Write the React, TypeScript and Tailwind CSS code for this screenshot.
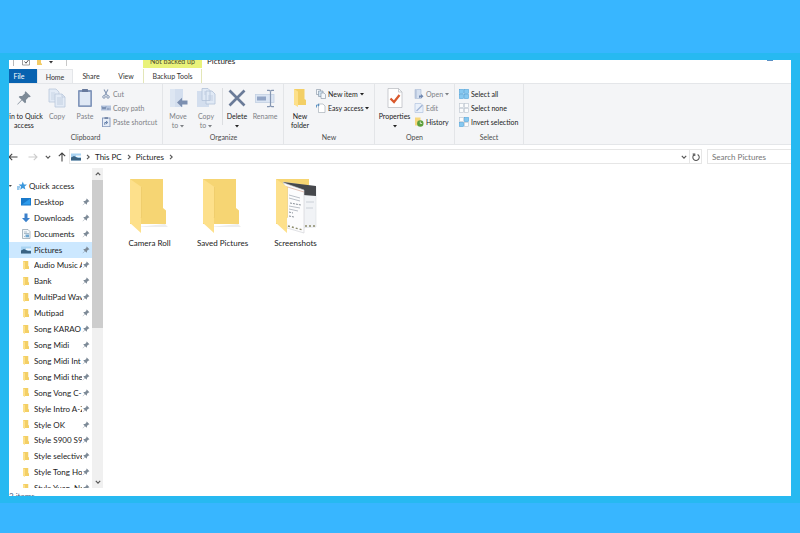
import type { ReactNode } from 'react';
import { clsx } from 'clsx';

/* ---------- icons ---------- */

function PinIcon({ className }: { className: string }) {
  return (
    <svg viewBox="0 0 16 16" className={className} fill="#7d8a97">
      <path d="M9.6 1.2 14.8 6.4 13.6 7.3 12.8 7 9.9 9.9 10.1 12.3 9 13.2 6 10.3 1.8 14.4 1.2 14.6 1.5 13.9 5.5 9.8 2.7 7 3.7 6 6.1 6.1 9 3.2 8.7 2.2Z" />
    </svg>
  );
}

function CopyIcon() {
  return (
    <svg viewBox="0 0 20 20" className="size-5" fill="#e3ebf6" stroke="#bac8dc" strokeWidth="0.8">
      <path d="M2 1h7l3 3v10H2z" />
      <path d="M4 5h4M4 7h4M4 9h4M4 11h4" stroke="#c2cfe2" />
      <path d="M8 6h7l3 3v10H8z" />
      <path d="M15 6v3h3M10 10h6M10 12h6M10 14h6M10 16h6" fill="none" />
    </svg>
  );
}

function PasteIcon() {
  return (
    <svg viewBox="0 0 20 20" className="size-5">
      <rect x="3" y="2" width="14" height="17" rx="1" fill="#8397bb" />
      <rect x="4.7" y="4" width="10.6" height="13.3" fill="#dfe8f5" />
      <rect x="7" y="1" width="6" height="3" rx="0.5" fill="#66799c" />
    </svg>
  );
}

function MoveIcon() {
  return (
    <svg viewBox="0 0 20 20" className="size-5">
      <path d="M2 1h13v18H2z" fill="#d3deee" />
      <path d="M2 1h5v18H2z" fill="#dde6f2" />
      <path d="M9 14.500 14 9.700v2.800h5.500v4H14v2.800z" fill="#7c8fb0" />
    </svg>
  );
}

function CopyToIcon() {
  return (
    <svg viewBox="0 0 20 20" className="size-5">
      <path d="M1 3h12v16H1z" fill="#d3deee" />
      <path d="M6 0.500h6l2 2v10H6zM10 3h6l3 3v10h-9z" fill="#e0e9f5" stroke="#b2c1d8" strokeWidth="0.8" />
      <path d="M12 8h5M12 10h5M12 12h5M8 4h2M8 6h2" stroke="#b8c6dc" strokeWidth="0.7" />
    </svg>
  );
}

function DeleteIcon() {
  return (
    <svg viewBox="0 0 20 20" className="size-5" stroke="#6a7b98" strokeWidth="2.7" fill="none">
      <path d="M2.500 2.500 17.500 17.500M17.500 2.500 2.500 17.500" />
    </svg>
  );
}

function RenameIcon() {
  return (
    <svg viewBox="0 0 20 20" className="size-5" fill="none">
      <rect x="0.5" y="6.500" width="18.500" height="8" fill="#dbe5f3" stroke="#c3d0e3" strokeWidth="0.8" />
      <rect x="2" y="8.500" width="9" height="4" fill="#92a5c6" />
      <path d="M12 2.300h2.200l1.300 1 1.300-1H19M15.500 3.300v14.400M12 18.700h2.200l1.300-1 1.300 1H19" stroke="#8596b2" strokeWidth="1.2" />
    </svg>
  );
}

function FolderIcon({ className }: { className: string }) {
  return (
    <svg viewBox="0 0 12 18" className={className} preserveAspectRatio="none">
      <path d="M0 0h10.500v10l1.500 1v5H0z" fill="#f3cf65" />
      <path d="M0 0 4 2.500v15.500L0 15.500z" fill="#fde08a" />
    </svg>
  );
}

function PropertiesIcon() {
  return (
    <svg viewBox="0 0 20 20" className="size-5">
      <path d="M3 0.500h10.500L17 4v15.500H3z" fill="#fff" stroke="#b4b8bd" strokeWidth="0.7" />
      <path d="M13.500 0.500V4H17" fill="none" stroke="#b4b8bd" strokeWidth="0.7" />
      <path d="M5.500 10.500 9 14l5.500-7" fill="none" stroke="#d9592d" strokeWidth="2.2" />
    </svg>
  );
}

function CutIcon() {
  return (
    <svg viewBox="0 0 10 10" className="size-2.5" fill="none" stroke="#8496b3">
      <path d="M3 0.500 6.300 6.500M7 0.500 3.700 6.500" strokeWidth="1.100" />
      <circle cx="3" cy="7.900" r="1.300" />
      <circle cx="7" cy="7.900" r="1.300" />
    </svg>
  );
}

function CopyPathIcon() {
  return (
    <svg viewBox="0 0 10 10" className="size-2.5">
      <rect y="2.500" width="10" height="5" fill="#b3c4de" />
      <path d="M1 3.500 2 6.200 3 4 4 6.200 5 3.500" fill="none" stroke="#5b7197" strokeWidth="0.7" />
      <path d="M6 6h.7M7.300 6H8M8.600 6h.7" stroke="#5b7197" />
    </svg>
  );
}

function PasteShortcutIcon() {
  return (
    <svg viewBox="0 0 10 10" className="size-2.5">
      <rect x="1.500" y="1" width="7.500" height="8.700" fill="#e6edf7" stroke="#8397bb" strokeWidth="0.9" />
      <rect x="3.500" y="0.300" width="3.500" height="1.500" fill="#66799c" />
      <path d="M3.800 7.800V5.500h2M5 4l1.800 1.500L5 7" fill="none" stroke="#54719f" strokeWidth="0.9" />
    </svg>
  );
}

function NewItemIcon() {
  return (
    <svg viewBox="0 0 10 10" className="size-2.5" fill="#f4f8fc" stroke="#7f8f9f" strokeWidth="0.6">
      <path d="M0.500 0.500h4v5h-4z" />
      <path d="M2.500 2h4.500v5.500H2.500z" fill="#cfe2f1" />
      <path d="M5 4h3l1.500 1.500v4H5z" />
    </svg>
  );
}

function EasyAccessIcon() {
  return (
    <svg viewBox="0 0 10 10" className="size-2.5">
      <path d="M2.500 1H7l2 2v6.500H2.500z" fill="#fff" stroke="#9aa4ae" strokeWidth="0.6" />
      <path d="M0.500 4.500V2h2.500M2 0.800 3.300 2 2 3.200" fill="none" stroke="#3e7fb9" strokeWidth="0.8" />
    </svg>
  );
}

function OpenIcon() {
  return (
    <svg viewBox="0 0 10 10" className="size-2.5">
      <path d="M1 0.500h6v9H1z" fill="#d5e0f0" stroke="#a8b9d4" strokeWidth="0.6" />
      <path d="M2 1.500v7" stroke="#7f93b6" strokeDasharray="1 1" />
      <path d="M5 9V6.500h2V5l2.500 2.300L7 9.500V8" fill="#7188b0" />
    </svg>
  );
}

function EditIcon() {
  return (
    <svg viewBox="0 0 10 10" className="size-2.5">
      <path d="M1 0.500h6l2 2v7H1z" fill="#e9f0fa" stroke="#b2c4df" strokeWidth="0.7" />
      <path d="M2.500 8 8.500 2" stroke="#a1b5d4" strokeWidth="1.300" />
    </svg>
  );
}

function HistoryIcon() {
  return (
    <svg viewBox="0 0 10 10" className="size-2.5">
      <path d="M1 0.500h5.500v8H1z" fill="#f6d77b" />
      <circle cx="6.300" cy="6.500" r="3.200" fill="#5d9f3c" />
      <path d="M6.300 4.500v2h1.800" stroke="#e8f3e2" strokeWidth="0.800" fill="none" />
    </svg>
  );
}

function SelectIcon({ kind }: { kind: 'all' | 'none' | 'invert' }) {
  const filled = { all: [1, 1, 1, 1], none: [0, 0, 0, 0], invert: [0, 1, 1, 0] }[kind];
  return (
    <svg viewBox="0 0 10 10" className="size-2.5" strokeWidth="0.6">
      {filled.map((on, i) => (
        <rect
          key={i}
          x={(i % 2) * 5 + 0.5}
          y={Math.floor(i / 2) * 5 + 0.5}
          width="4"
          height="4"
          fill={on ? '#86c8f0' : '#fbfcfd'}
          stroke={on ? '#4fa3da' : '#bac4cd'}
        />
      ))}
    </svg>
  );
}

function PictureIcon() {
  return (
    <svg viewBox="0 0 10 10" className="size-2.5 shrink-0">
      <rect y="1.500" width="10" height="7" fill="#a9d3f2" />
      <path d="M0 5.500 3 4l4 2h3v2.500H0z" fill="#3b6484" />
      <path d="M5 3.500h5v1.500H5z" fill="#f2f8fd" />
    </svg>
  );
}

function StarIcon() {
  return (
    <svg viewBox="0 0 10 10" className="size-2.5 shrink-0" fill="#3b97dc">
      <path d="M5.800 0.500 6.900 3.400 10 3.600 7.600 5.600 8.400 8.600 5.800 7 3.200 8.700 4 5.600 1.600 3.600 4.700 3.400Z" />
      <path d="M0 5.500h3v1H0zM0 7.500h2.500v1H0z" />
    </svg>
  );
}

function DesktopIcon() {
  return (
    <svg viewBox="0 0 10 10" className="size-2.5 shrink-0">
      <rect y="1" width="10" height="7.500" fill="#1979ca" />
      <path d="M1 7.500 9 1.800v5.700z" fill="#2f9cec" />
    </svg>
  );
}

function DownloadIcon() {
  return (
    <svg viewBox="0 0 10 10" className="size-2.5 shrink-0">
      <path d="M3.500 0.500h3V5H9L5 9.300 1 5h2.500z" fill="#3a80cb" />
    </svg>
  );
}

function DocumentIcon() {
  return (
    <svg viewBox="0 0 10 10" className="size-2.5 shrink-0">
      <path d="M1.500 0.500H7l2 2v7H1.500z" fill="#f2f6f9" stroke="#8d9daa" strokeWidth="0.7" />
      <path d="M3 3h3M3 4.500h5M3 7.500h1" stroke="#8aa3b6" strokeWidth="0.7" />
      <rect x="4.500" y="5.500" width="3.500" height="2.800" fill="#6fa6cf" />
    </svg>
  );
}

function Chevron({ dir, className }: { dir: 'right' | 'down' | 'up'; className?: string }) {
  const paths = { right: 'M2 0.800 4.200 3 2 5.200', down: 'M0.800 1.800 3 4.200 5.200 1.800', up: 'M0.800 4.200 3 1.800 5.200 4.200' };
  return (
    <svg viewBox="0 0 6 6" className={clsx('size-1.5 shrink-0', className)} fill="none" stroke="#555" strokeWidth="1.100">
      <path d={paths[dir]} />
    </svg>
  );
}

function Caret() {
  return (
    <svg viewBox="0 0 4 4" className="size-1 shrink-0" fill="currentColor">
      <path d="M0 1h4L2 3.500z" />
    </svg>
  );
}

function ArrowIcon({ className }: { className?: string }) {
  return (
    <svg viewBox="0 0 10 10" className={clsx('size-2.5', className)} fill="none" stroke="currentColor" strokeWidth="1.100">
      <path d="M9.500 5H1M4.200 1.800 1 5l3.200 3.200" />
    </svg>
  );
}

/* ---------- ribbon ---------- */

interface BigButtonProps {
  icon: ReactNode;
  label: string;
  second?: string;
  caret?: boolean;
  disabled?: boolean;
  className?: string;
}

function BigButton({ icon, label, second, caret, disabled, className = 'w-7' }: BigButtonProps) {
  return (
    <button
      disabled={disabled}
      className={clsx(
        'flex shrink-0 flex-col items-center pt-1 whitespace-nowrap leading-[9px]',
        disabled ? 'text-[#7d8085]' : 'text-[#222]',
        className,
      )}
    >
      <span className="mb-1 flex h-5 items-center">{icon}</span>
      <span>{label}</span>
      {(second || caret) && (
        <span className="flex h-[9px] items-center gap-0.5">
          {second}
          {caret && <Caret />}
        </span>
      )}
    </button>
  );
}

function SmallButton({ icon, label, caret, disabled }: { icon: ReactNode; label: string; caret?: boolean; disabled?: boolean }) {
  return (
    <button
      disabled={disabled}
      className={clsx('flex h-3.5 items-center gap-0.5 whitespace-nowrap', disabled ? 'text-[#7d8085]' : 'text-[#222]')}
    >
      {icon}
      <span>{label}</span>
      {caret && <Caret />}
    </button>
  );
}

function RibbonGroup({ title, className, children }: { title: string; className: string; children: ReactNode }) {
  return (
    <section className={clsx('flex shrink-0 flex-col border-r border-[#e3e5e8]', className)}>
      <div className="flex flex-1">{children}</div>
      <h2 className="pb-0.5 text-center leading-[9px] text-[#4c4c4c]">{title}</h2>
    </section>
  );
}

function Ribbon() {
  return (
    <div className="flex h-[62px] overflow-hidden border-y border-[#e4e6e9] bg-[#f4f5f7]">
      <RibbonGroup title="Clipboard" className="w-[154px]">
        <BigButton icon={<PinIcon className="size-4" />} label="Pin to Quick" second="access" className="-ml-1 w-[38px]" />
        <BigButton icon={<CopyIcon />} label="Copy" disabled />
        <BigButton icon={<PasteIcon />} label="Paste" disabled />
        <div className="ml-0.5 flex flex-col pt-[3px]">
          <SmallButton icon={<CutIcon />} label="Cut" disabled />
          <SmallButton icon={<CopyPathIcon />} label="Copy path" disabled />
          <SmallButton icon={<PasteShortcutIcon />} label="Paste shortcut" disabled />
        </div>
      </RibbonGroup>
      <RibbonGroup title="Organize" className="w-[121px] pl-px">
        <BigButton icon={<MoveIcon />} label="Move" second="to" caret disabled />
        <BigButton icon={<CopyToIcon />} label="Copy" second="to" caret disabled />
        <div className="mt-1 mb-2 ml-0.5 border-l border-[#dcdee1]" />
        <BigButton icon={<DeleteIcon />} label="Delete" caret />
        <BigButton icon={<RenameIcon />} label="Rename" disabled />
      </RibbonGroup>
      <RibbonGroup title="New" className="w-[91px]">
        <BigButton icon={<FolderIcon className="h-[18px] w-3" />} label="New" second="folder" className="w-8" />
        <div className="flex flex-col pt-[3px]">
          <SmallButton icon={<NewItemIcon />} label="New item" caret />
          <SmallButton icon={<EasyAccessIcon />} label="Easy access" caret />
        </div>
      </RibbonGroup>
      <RibbonGroup title="Open" className="w-20">
        <BigButton icon={<PropertiesIcon />} label="Properties" caret className="w-[39px]" />
        <div className="flex flex-col pt-[3px]">
          <SmallButton icon={<OpenIcon />} label="Open" caret disabled />
          <SmallButton icon={<EditIcon />} label="Edit" disabled />
          <SmallButton icon={<HistoryIcon />} label="History" />
        </div>
      </RibbonGroup>
      <RibbonGroup title="Select" className="w-[69px]">
        <div className="flex flex-col pt-[3px] pl-1">
          <SmallButton icon={<SelectIcon kind="all" />} label="Select all" />
          <SmallButton icon={<SelectIcon kind="none" />} label="Select none" />
          <SmallButton icon={<SelectIcon kind="invert" />} label="Invert selection" />
        </div>
      </RibbonGroup>
    </div>
  );
}

/* ---------- title and tabs ---------- */

function TitleBar() {
  return (
    <header className="flex h-[9px] items-start overflow-hidden">
      <div className="flex w-[134px] items-start gap-1 pl-1">
        <span className="h-1.5 border-l border-[#b8b8b8]" />
        <svg viewBox="0 0 40 6" className="ml-1 h-1.5 w-10">
          <path d="M0.500 0v5h7V0" fill="#fff" stroke="#888" strokeWidth="0.800" />
          <path d="M2.500 1.500 4 3.200 6.500 0" fill="none" stroke="#555" />
          <path d="M15 0h4v3l1 1v1h-5z" fill="#f2cb65" />
          <path d="M27 1h4l-2 2.500z" fill="#333" />
        </svg>
        <span className="h-1.5 border-l border-[#c8c8c8]" />
      </div>
      <div className="flex h-2 w-[59px] items-center justify-center bg-[#e9f27a] leading-[9px] whitespace-nowrap text-[#4b4b2d]">
        <span className="-mt-1.5">Not backed up</span>
      </div>
      <h1 className="-mt-[3px] ml-[5px] text-[8px] leading-[9px] text-[#222]">Pictures</h1>
      <span className="mr-[18px] ml-auto h-px w-1.5 bg-[#5b8fc4]" />
    </header>
  );
}

function Tabs() {
  return (
    <nav className="flex h-3.5 text-[#333]">
      <button className="w-7 bg-[#0862b0] pr-2 text-white">File</button>
      <button className="-mb-px w-9 border-x border-t border-[#e4e6e9] bg-[#f4f5f7]">Home</button>
      <button className="w-9">Share</button>
      <button className="w-[34px]">View</button>
      <button className="w-[59px] border-x border-[#e3e6b8] whitespace-nowrap">Backup Tools</button>
    </nav>
  );
}

function AddressBar() {
  return (
    <div className="flex h-[19px] shrink-0 items-end text-[8px]">
      <div className="flex h-[15px] w-[60px] shrink-0 items-center text-[#444]">
        <button aria-label="Back" className="-ml-px"><ArrowIcon /></button>
        <button aria-label="Forward" className="ml-2.5 text-[#ccc]"><ArrowIcon className="rotate-180" /></button>
        <button aria-label="Recent locations" className="ml-[7px]"><Chevron dir="down" /></button>
        <button aria-label="Up" className="ml-1.5"><ArrowIcon className="rotate-90" /></button>
      </div>
      <div className="flex h-[15px] flex-1 items-center gap-1 border border-[#e6e6e6] pl-px text-[#222]">
        <PictureIcon />
        <Chevron dir="right" />
        <a href="#this-pc">This PC</a>
        <Chevron dir="right" />
        <a href="#pictures">Pictures</a>
        <Chevron dir="right" />
        <button aria-label="Previous locations" className="ml-auto"><Chevron dir="down" /></button>
        <button aria-label="Refresh" className="-ml-0.5 flex h-full w-3 items-center justify-center border-l border-[#e6e6e6]">
          <svg viewBox="0 0 10 10" className="size-2" fill="none" stroke="#555" strokeWidth="1.300">
            <path d="M7 1.800A4 4 0 1 1 2.500 2.200M0.800 1.200h2.700v2.700" />
          </svg>
        </button>
      </div>
      <input
        type="text"
        aria-label="Search Pictures"
        placeholder="Search Pictures"
        className="ml-[5px] h-[15px] w-21 shrink-0 border border-r-0 border-[#e6e6e6] pl-1 outline-none placeholder:text-[#757575]"
      />
    </div>
  );
}

/* ---------- navigation pane ---------- */

const places: { name: string; icon?: ReactNode }[] = [
  { name: 'Desktop', icon: <DesktopIcon /> },
  { name: 'Downloads', icon: <DownloadIcon /> },
  { name: 'Documents', icon: <DocumentIcon /> },
  { name: 'Pictures', icon: <PictureIcon /> },
  { name: 'Audio Music A' },
  { name: 'Bank' },
  { name: 'MultiPad Wav' },
  { name: 'Mutipad' },
  { name: 'Song KARAO' },
  { name: 'Song Midi' },
  { name: 'Song Midi Int' },
  { name: 'Song Midi the' },
  { name: 'Song Vong C-' },
  { name: 'Style Intro A-Z' },
  { name: 'Style OK' },
  { name: 'Style S900 S9' },
  { name: 'Style selective' },
  { name: 'Style Tong Ho' },
  { name: 'Style Yuan_Na' },
];

function Sidebar() {
  return (
    <aside className="flex w-[94px] shrink-0 overflow-hidden pt-1">
      <ul className="mt-2.5 -mb-2 flex min-w-0 flex-1 flex-col text-[#222]">
        <li className="flex min-h-0 flex-1 items-center">
          <svg viewBox="0 0 4 4" className="mr-1 size-1"><path d="M0 1h3L1 3z" fill="#444" /></svg>
          <StarIcon />
          <a href="#quick" className="ml-0.5">Quick access</a>
        </li>
        {places.map(({ name, icon }) => (
          <li key={name} className={clsx('flex min-h-0 flex-1 items-center pr-0.5 pl-3', name === 'Pictures' && 'bg-[#cce8ff]')}>
            {icon ?? <span className="flex w-2.5 justify-center"><FolderIcon className="h-[9px] w-1.5" /></span>}
            <a href={`#${name}`} className="ml-[3px] min-w-0 flex-1 overflow-hidden whitespace-nowrap">{name}</a>
            <PinIcon className="size-2 shrink-0" />
          </li>
        ))}
      </ul>
      <div className="flex w-[11px] shrink-0 flex-col items-center bg-[#f0f0f0]">
        <button aria-label="Scroll up" className="flex h-3 items-center"><Chevron dir="up" /></button>
        <div className="min-h-0 w-full flex-1"><div className="h-1/2 bg-[#cdcdcd]" /></div>
        <button aria-label="Scroll down" className="flex h-3 items-center"><Chevron dir="down" /></button>
      </div>
    </aside>
  );
}

/* ---------- files ---------- */

function LargeFolder({ preview }: { preview?: boolean }) {
  return (
    <svg viewBox="0 0 42 56" className="h-14 w-[42px]">
      <path d="M8 49h31l-3-3z" fill="#ededed" />
      <path d="M1 1h33v29l3 2.500V46H1z" fill="#f6d573" />
      {preview && (
        <>
          <path d="M8 4 41 9v40l-19 1z" fill="#f1f3f6" stroke="#d5d8dc" strokeWidth="0.500" />
          <path d="M8 4 41 8v10L28 17z" fill="#46484c" />
          <path d="M31 24h8M31 30h7" stroke="#cbd0d7" />
          <path d="M9 5 29 12v43L12 50z" fill="#fcfcfd" stroke="#cccfd4" strokeWidth="0.600" />
          <path d="M11 8.500 29 14" stroke="#e0b9ad" strokeWidth="0.900" />
          <path d="M14 17l11 3M14 20l11 3M14 28l11 2M14 31l9 2" stroke="#b2b8c1" strokeWidth="0.900" />
          <path d="M15 25l11 2M14 34l4 1M14 38l5 1" stroke="#7b828c" strokeWidth="0.900" strokeDasharray="2 1" />
          <path d="M13 48l15 4M30 48h10" stroke="#8c8b6a" strokeWidth="1.400" strokeDasharray="2 2" />
        </>
      )}
      <path d="M1 1 12.500 9v30l-0.500 1v15L1 45z" fill="#fde08b" />
      <path d="M12.500 9v30l-0.500 1" fill="none" stroke="#e6c25d" strokeWidth="0.500" />
    </svg>
  );
}

function Files() {
  return (
    <main className="flex flex-1 items-start pt-3.5 pl-2.5">
      {['Camera Roll', 'Saved Pictures', 'Screenshots'].map((name) => (
        <a key={name} href={`#${name}`} className="flex w-[73px] flex-col items-center whitespace-nowrap text-[#222]">
          <LargeFolder preview={name === 'Screenshots'} />
          <span className="mt-1 leading-[10px]">{name}</span>
        </a>
      ))}
    </main>
  );
}

export default function App() {
  return (
    <div className="flex h-screen flex-col bg-[#38b6ff] pt-[53px] pb-[30px] font-[Lato,'Open_Sans',sans-serif] text-[7px] leading-[10px]">
      <div className="flex min-h-0 flex-1 bg-[#27b9f1] px-[9px] py-[7px]">
        <div className="flex min-w-0 flex-1 flex-col overflow-hidden bg-white">
          <TitleBar />
          <Tabs />
          <Ribbon />
          <AddressBar />
          <div className="flex min-h-0 flex-1 text-[8px]">
            <Sidebar />
            <Files />
          </div>
          <footer className="h-2 shrink-0 overflow-hidden pt-[3px] text-[8px] text-[#3c5a80]">3 items</footer>
        </div>
      </div>
    </div>
  );
}
